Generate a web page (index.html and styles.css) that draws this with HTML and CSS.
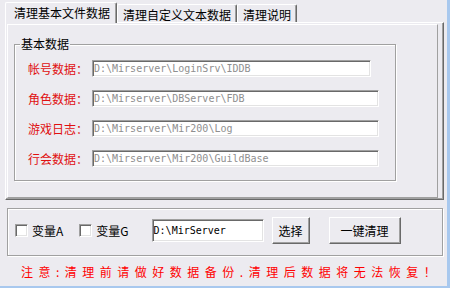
FILE: index.html
```html
<!DOCTYPE html>
<html lang="zh-CN">
<head>
    <meta charset="UTF-8">
    <title>清理数据</title>
    <link rel="stylesheet" href="styles.css">
</head>
<body>
    <div class="window">
        <div class="tabs">
            <div class="tab-strip">
                <div class="tab active">清理基本文件数据</div>
                <div class="tab">清理自定义文本数据</div>
                <div class="tab">清理说明</div>
            </div>
            <div class="tab-page">
                <div class="panel">
                    <fieldset class="group">
                        <legend>基本数据</legend>
                        <div class="row">
                            <label>帐号数据：</label>
                            <input class="path short" value="D:\Mirserver\LoginSrv\IDDB" disabled>
                        </div>
                        <div class="row">
                            <label>角色数据：</label>
                            <input class="path" value="D:\Mirserver\DBServer\FDB" disabled>
                        </div>
                        <div class="row">
                            <label>游戏日志：</label>
                            <input class="path" value="D:\Mirserver\Mir200\Log" disabled>
                        </div>
                        <div class="row">
                            <label>行会数据：</label>
                            <input class="path" value="D:\Mirserver\Mir200\GuildBase" disabled>
                        </div>
                    </fieldset>
                </div>
            </div>
        </div>

        <!-- options -->
        <div class="options">
            <label class="check"><span class="box"></span>变量A</label>
            <label class="check second"><span class="box"></span>变量G</label>
            <input class="dir" value="D:\MirServer">
            <button class="btn">选择</button>
            <button class="btn wide">一键清理</button>
        </div>

        <p class="warning">注意:清理前请做好数据备份.清理后数据将无法恢复！</p>
    </div>
</body>
</html>
```

FILE: styles.css
```css
body {
    margin: 0;
    font-family: "Noto Sans CJK SC", "Liberation Sans", sans-serif;
    font-size: 12px;
    color: #000;
}
.window {
    width: 447px;
    height: 286px;
    background: #ecebf0;
    border-right: 3px solid #a8c8ee;
    border-bottom: 2px solid #a8c8ee;
    overflow: hidden;
}
.tabs {
    width: 439px;
    margin: 2px 0 0 5px;
}
.tab-strip {
    display: flex;
    align-items: flex-end;
    height: 20px;
}
.tab {
    height: 18px;
    box-sizing: border-box;
    padding: 2px 5px 0;
    line-height: 15px;
    white-space: nowrap;
    border: 1px solid #fff;
    border-bottom: none;
    border-right-color: #696969;
    border-radius: 2px 2px 0 0;
    box-shadow: inset -1px 0 #a0a0a0;
}
.tab.active {
    height: 21px;
    margin-bottom: -1px;
    padding: 2px 6px 0 8px;
    line-height: 16px;
    background: #ecebf0;
    position: relative;
}
.tab-page {
    height: 178px;
    box-sizing: border-box;
    border: 1px solid;
    border-color: #fff #696969 #696969 #fff;
    box-shadow: inset -1px -1px #a0a0a0;
    padding: 1px 5px 1px 1px;
}
.panel {
    height: 100%;
    box-sizing: border-box;
    border: 1px solid;
    border-color: #fff #a0a0a0 #a0a0a0 #fff;
    padding: 12px 0 0 6px;
}
.group {
    width: 382px;
    box-sizing: border-box;
    margin: 0;
    padding: 9px 0 13px 13px;
    border: 1px solid #a0a0a0;
    box-shadow: inset 1px 1px #fff, 1px 1px #fff;
}
.group legend {
    margin-left: -8px;
    padding: 0 1px;
    line-height: 14px;
    background: #ecebf0;
}
.row {
    display: flex;
    align-items: center;
    height: 17px;
}
.row + .row {
    margin-top: 13px;
}
.row label {
    width: 64px;
    color: #e01010;
}
.path, .dir {
    box-sizing: border-box;
    margin: 0;
    padding: 0 0 0 1px;
    border: 1px solid;
    border-color: #a0a0a0 #fff #fff #a0a0a0;
    box-shadow: inset 1px 1px #696969, inset -1px -1px #e3e3e3;
    background: #fff;
    font: 10px "DejaVu Sans Mono", monospace;
    outline: none;
}
.path {
    width: 287px;
    height: 17px;
    color: #8f8f8f;
}
.path.short {
    width: 279px;
}
.options {
    display: flex;
    align-items: center;
    width: 436px;
    height: 48px;
    box-sizing: border-box;
    margin: 8px 0 0 7px;
    padding: 0 0 3px 7px;
    border: 1px solid #a0a0a0;
    box-shadow: inset 1px 1px #fff, 1px 1px #fff;
}
.check {
    display: flex;
    align-items: center;
    gap: 4px;
}
.check.second {
    margin-left: 16px;
}
.box {
    width: 13px;
    height: 13px;
    box-sizing: border-box;
    background: #fff;
    border: 1px solid;
    border-color: #a0a0a0 #fff #fff #a0a0a0;
    box-shadow: inset 1px 1px #696969, inset -1px -1px #e3e3e3;
}
.dir {
    width: 112px;
    height: 23px;
    margin-left: 23px;
    color: #000;
}
.btn {
    width: 38px;
    height: 27px;
    margin-left: 8px;
    padding: 0;
    font: 12px "Noto Sans CJK SC", sans-serif;
    color: #000;
    background: #ecebf0;
    border: 1px solid;
    border-color: #fff #696969 #696969 #fff;
    box-shadow: inset -1px -1px #a0a0a0;
}
.btn.wide {
    width: 72px;
    margin-left: 19px;
}
.warning {
    margin: 9px 0 0 21px;
    line-height: 14px;
    color: #f00;
    letter-spacing: 5.5px;
    white-space: nowrap;
}
```
